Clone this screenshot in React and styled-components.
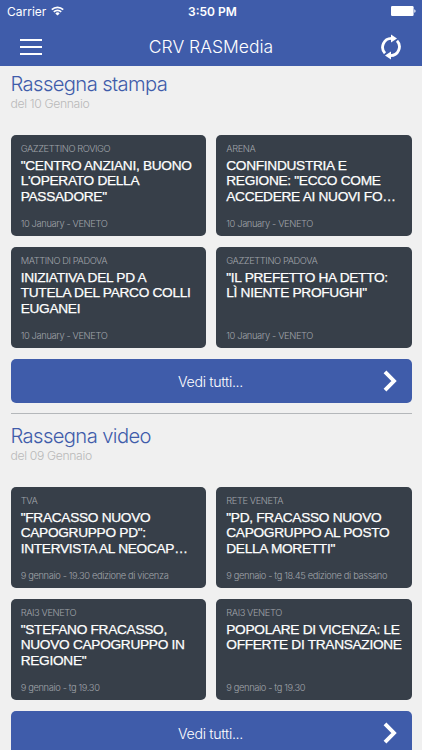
import React from 'react';
import styled, { createGlobalStyle } from 'styled-components';

const sections = [
  {
    title: 'Rassegna stampa',
    date: 'del 10 Gennaio',
    items: [
      {
        source: 'GAZZETTINO ROVIGO',
        lines: ['"CENTRO ANZIANI, BUONO', "L'OPERATO DELLA", 'PASSADORE"'],
        info: '10 January - VENETO',
      },
      {
        source: 'ARENA',
        lines: ['CONFINDUSTRIA E', 'REGIONE: "ECCO COME', 'ACCEDERE AI NUOVI FO…'],
        info: '10 January - VENETO',
      },
      {
        source: 'MATTINO DI PADOVA',
        lines: ['INIZIATIVA DEL PD A', 'TUTELA DEL PARCO COLLI', 'EUGANEI'],
        info: '10 January - VENETO',
      },
      {
        source: 'GAZZETTINO PADOVA',
        lines: ['"IL PREFETTO HA DETTO:', 'LÌ NIENTE PROFUGHI"'],
        info: '10 January - VENETO',
      },
    ],
  },
  {
    title: 'Rassegna video',
    date: 'del 09 Gennaio',
    items: [
      {
        source: 'TVA',
        lines: ['"FRACASSO NUOVO', 'CAPOGRUPPO PD":', 'INTERVISTA AL NEOCAP…'],
        info: '9 gennaio - 19.30 edizione di vicenza',
      },
      {
        source: 'RETE VENETA',
        lines: ['"PD, FRACASSO NUOVO', 'CAPOGRUPPO AL POSTO', 'DELLA MORETTI"'],
        info: '9 gennaio - tg 18.45 edizione di bassano',
      },
      {
        source: 'RAI3 VENETO',
        lines: ['"STEFANO FRACASSO,', 'NUOVO CAPOGRUPPO IN', 'REGIONE"'],
        info: '9 gennaio - tg 19.30',
      },
      {
        source: 'RAI3 VENETO',
        lines: ['POPOLARE DI VICENZA: LE', 'OFFERTE DI TRANSAZIONE'],
        info: '9 gennaio - tg 19.30',
      },
    ],
  },
];

const WifiIcon = () => (
  <svg width="13" height="10" viewBox="0 0 13 10" fill="none" stroke="#fff" strokeWidth="1.7">
    <path d="M0.8 3.6a8.2 8.2 0 0 1 11.4 0" />
    <path d="M2.8 5.9a5.3 5.3 0 0 1 7.4 0" />
    <path d="M6.5 9.6L4.3 7.4a3.1 3.1 0 0 1 4.4 0z" fill="#fff" stroke="none" />
  </svg>
);

const BatteryIcon = () => (
  <svg width="25" height="10" viewBox="0 0 25 10" fill="#fff">
    <rect x="0" y="0" width="22.6" height="10" rx="1.2" />
    <path d="M23.3 3.2a1.9 1.9 0 0 1 0 3.6z" />
  </svg>
);

const SyncIcon = () => (
  <svg width="22" height="26" viewBox="0 0 22 26" fill="none" stroke="#fff" strokeWidth="2.8">
    <path d="M5 19.2A8.8 8.8 0 0 1 11.6 4.4" />
    <path d="M17 6.8A8.8 8.8 0 0 1 10.4 21.6" />
    <path d="M11 0.6l6 4-6 4z" fill="#fff" stroke="none" />
    <path d="M11 17.4l-6 4 6 4z" fill="#fff" stroke="none" />
  </svg>
);

const ChevronIcon = () => (
  <svg width="14" height="22" viewBox="0 0 14 22" fill="none" stroke="#fff" strokeWidth="3.9">
    <path d="M2 1.8L11 11L2 20.2" />
  </svg>
);

const NewsCard = ({ item }) => (
  <Card>
    <Source>{item.source}</Source>
    <Headline>
      {item.lines.map((line) => (
        <HeadlineRow key={line}>{line}</HeadlineRow>
      ))}
    </Headline>
    <Info>{item.info}</Info>
  </Card>
);

const App = () => (
  <Screen>
    <GlobalStyle />
    <Header>
      <StatusBar>
        <Carrier>
          Carrier
          <WifiIcon />
        </Carrier>
        <Clock>3:50 PM</Clock>
        <Battery>
          <BatteryIcon />
        </Battery>
      </StatusBar>
      <NavBar>
        <MenuButton aria-label="Menu">
          <MenuLine />
          <MenuLine />
          <MenuLine />
        </MenuButton>
        <NavTitle>CRV RASMedia</NavTitle>
        <SyncButton aria-label="Aggiorna">
          <SyncIcon />
        </SyncButton>
      </NavBar>
    </Header>
    {sections.map((section) => (
      <Section key={section.title}>
        <SectionTitle>{section.title}</SectionTitle>
        <SectionDate>{section.date}</SectionDate>
        <CardGrid>
          {section.items.map((item) => (
            <NewsCard key={item.source + item.lines[0]} item={item} />
          ))}
        </CardGrid>
        <MoreButton>
          <MoreLabel>Vedi tutti...</MoreLabel>
          <ChevronIcon />
        </MoreButton>
        <Divider />
      </Section>
    ))}
  </Screen>
);

export default App;

// Styled-components
const GlobalStyle = createGlobalStyle`
  * {
    box-sizing: border-box;
  }

  body {
    margin: 0;
    background: #f0f0f0;
  }
`;

const Screen = styled.div`
  width: 422px;
  height: 750px;
  overflow: hidden;
  background: #f0f0f0;
  font-family: Inter, 'Liberation Sans', sans-serif;
  font-weight: 300;
  white-space: nowrap;
`;

const Header = styled.header`
  height: 65.6px;
  background: #3f5caa;
  color: #fff;
`;

const StatusBar = styled.div`
  display: grid;
  grid-template-columns: 1fr auto 1fr;
  align-items: center;
  height: 21px;
  padding: 1px 6px 0 7px;
  font-size: 12px;
  font-weight: 400;
`;

const Carrier = styled.div`
  display: flex;
  align-items: center;
  gap: 5px;
`;

const Clock = styled.div`
  padding-left: 2px;
  font-weight: 600;
`;

const Battery = styled.div`
  display: flex;
  justify-content: flex-end;
`;

const NavBar = styled.div`
  display: grid;
  grid-template-columns: 60px 1fr 60px;
  align-items: center;
  height: 44px;
  padding-top: 7px;
`;

const MenuButton = styled.button`
  display: flex;
  flex-direction: column;
  gap: 5px;
  margin: 0 0 0 20px;
  padding: 0;
  width: 22px;
  border: 0;
  background: none;
`;

const MenuLine = styled.span`
  height: 2px;
  background: #fff;
`;

const NavTitle = styled.h1`
  margin: 0;
  font-size: 17.5px;
  font-weight: 300;
  line-height: 22px;
  text-align: center;
`;

const SyncButton = styled.button`
  display: flex;
  margin: 0 0 0 18px;
  padding: 0;
  border: 0;
  background: none;
`;

const Section = styled.section`
  padding: 5px 10.5px 0;
`;

const SectionTitle = styled.h2`
  margin: 0;
  color: #3f5caa;
  font-size: 20.2px;
  font-weight: 300;
  letter-spacing: -0.6px;
  line-height: 26px;
`;

const SectionDate = styled.div`
  color: #b9b9b9;
  font-size: 12.2px;
  letter-spacing: -0.35px;
  line-height: 13px;
`;

const CardGrid = styled.div`
  display: grid;
  grid-template-columns: repeat(2, minmax(0, 1fr));
  grid-auto-rows: 101.8px;
  gap: 10.2px;
  margin-top: 25px;
`;

const Card = styled.article`
  display: flex;
  flex-direction: column;
  padding: 8.4px 10.2px 6.4px;
  border-radius: 5px;
  background: #373f49;
  color: #fff;
`;

const Source = styled.div`
  color: #a0a4a9;
  font-size: 9.3px;
  letter-spacing: -0.4px;
  line-height: 12px;
`;

const Headline = styled.h3`
  margin: 2.8px 0 0;
  font-family: 'Liberation Sans', sans-serif;
  font-size: 13.7px;
  font-weight: 400;
  letter-spacing: -0.3px;
  line-height: 15.7px;
  -webkit-text-stroke: 0.25px #fff;
`;

const HeadlineRow = styled.span`
  display: block;
`;

const Info = styled.div`
  margin-top: auto;
  color: #a0a4a9;
  font-size: 9.3px;
  letter-spacing: -0.36px;
  line-height: 12px;
`;

const MoreButton = styled.button`
  display: grid;
  grid-template-columns: 1fr auto 1fr;
  align-items: center;
  width: 100%;
  height: 44.8px;
  margin: 10.2px 0 0;
  padding: 0 15px 0 14px;
  border: 0;
  border-radius: 5px;
  background: #3f5caa;
  color: #fff;
  font: inherit;
  font-size: 14.2px;
  letter-spacing: -0.3px;

  svg {
    justify-self: end;
  }
`;

const MoreLabel = styled.span`
  grid-column: 2;
  padding-top: 1px;
`;

const Divider = styled.hr`
  height: 1px;
  margin: 10px 0 3.2px;
  border: 0;
  background: #b4b7ba;
`;
